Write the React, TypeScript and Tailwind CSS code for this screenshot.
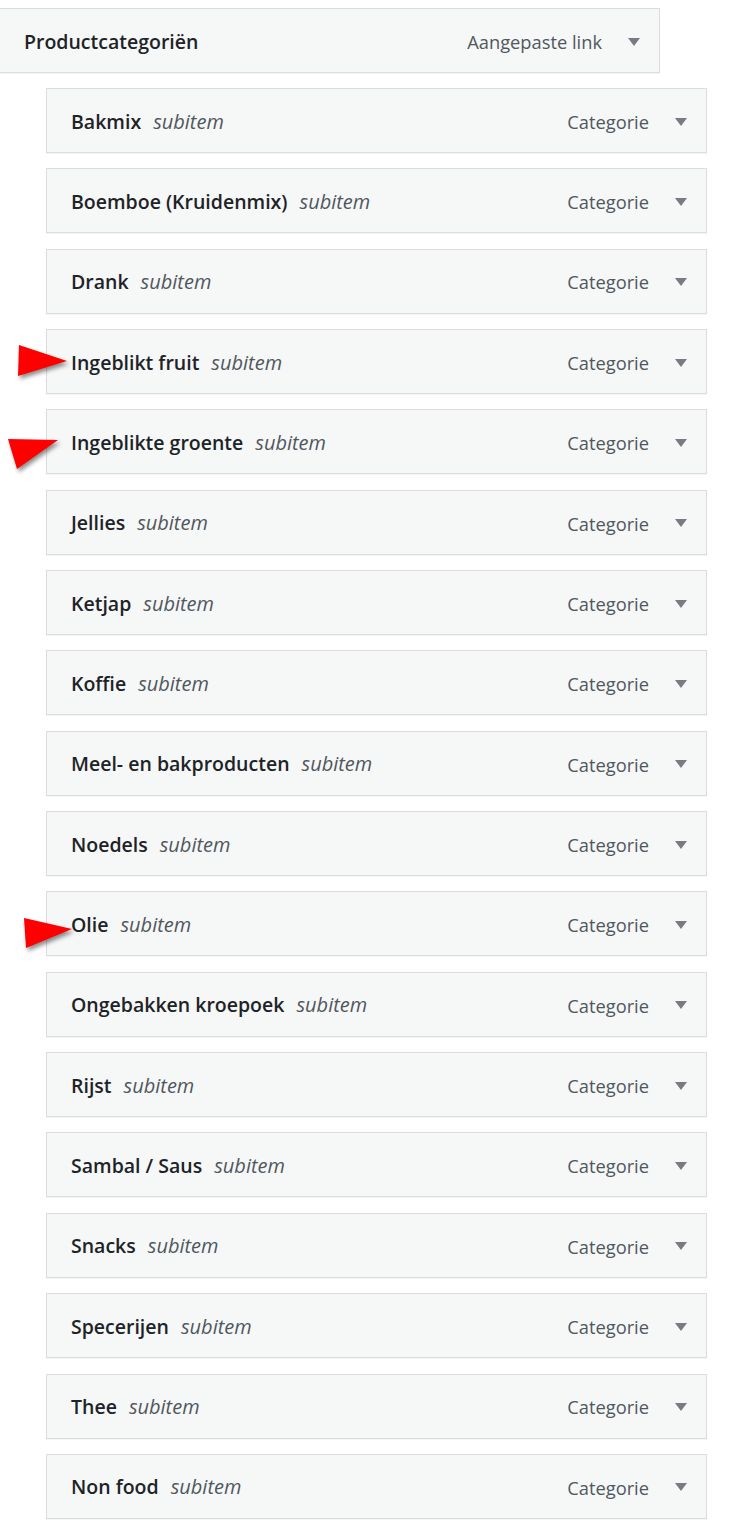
const items = [
  "Bakmix",
  "Boemboe (Kruidenmix)",
  "Drank",
  "Ingeblikt fruit",
  "Ingeblikte groente",
  "Jellies",
  "Ketjap",
  "Koffie",
  "Meel- en bakproducten",
  "Noedels",
  "Olie",
  "Ongebakken kroepoek",
  "Rijst",
  "Sambal / Saus",
  "Snacks",
  "Specerijen",
  "Thee",
  "Non food",
];

function Caret() {
  return (
    <svg width="12" height="8" viewBox="0 0 12 8" className="shrink-0">
      <polygon points="0,0 12,0 6,8" fill="#787c82" />
    </svg>
  );
}

function MenuItem({ title, sub, type }: { title: string; sub?: string; type: string }) {
  return (
    <div className="flex h-[65px] items-center justify-between border border-[#dcdcde] bg-[#f6f7f7] pl-[24px] pr-[19px] shadow-[0_1px_1px_rgba(0,0,0,0.04)]">
      <div className="flex items-baseline gap-[12px] pt-[2px]">
        <span className="text-[19.5px] font-semibold text-[#1d2327]">{title}</span>
        {sub && <span className="text-[20px] italic text-[#50575e]">{sub}</span>}
      </div>
      <div className="flex items-center gap-[26px] pt-[2px]">
        <span className="text-[18.3px] text-[#50575e]">{type}</span>
        <Caret />
      </div>
    </div>
  );
}

export default function App() {
  return (
    <div
      className="relative min-h-screen overflow-hidden bg-white pt-[8px]"
      style={{ fontFamily: '"Open Sans", "Noto Sans", sans-serif' }}
    >
      <div className="ml-[-1px] w-[661px]">
        <MenuItem title="Productcategoriën" type="Aangepaste link" />
      </div>

      <div className="ml-[46px] mt-[15px] flex w-[661px] flex-col gap-[15.35px]">
        {items.map((name) => (
          <MenuItem key={name} title={name} sub="subitem" type="Categorie" />
        ))}
      </div>

      {/* red annotation arrows */}
      <svg
        width="732"
        height="1535"
        className="pointer-events-none absolute left-0 top-0 drop-shadow-[2px_3px_2px_rgba(0,0,0,0.45)]"
      >
        <polygon points="19,345 67,361 18,376" fill="#ff0000" />
        <polygon points="8,439 58,440 17,469" fill="#ff0000" />
        <polygon points="24,918 72,929 26,948" fill="#ff0000" />
      </svg>
    </div>
  );
}
